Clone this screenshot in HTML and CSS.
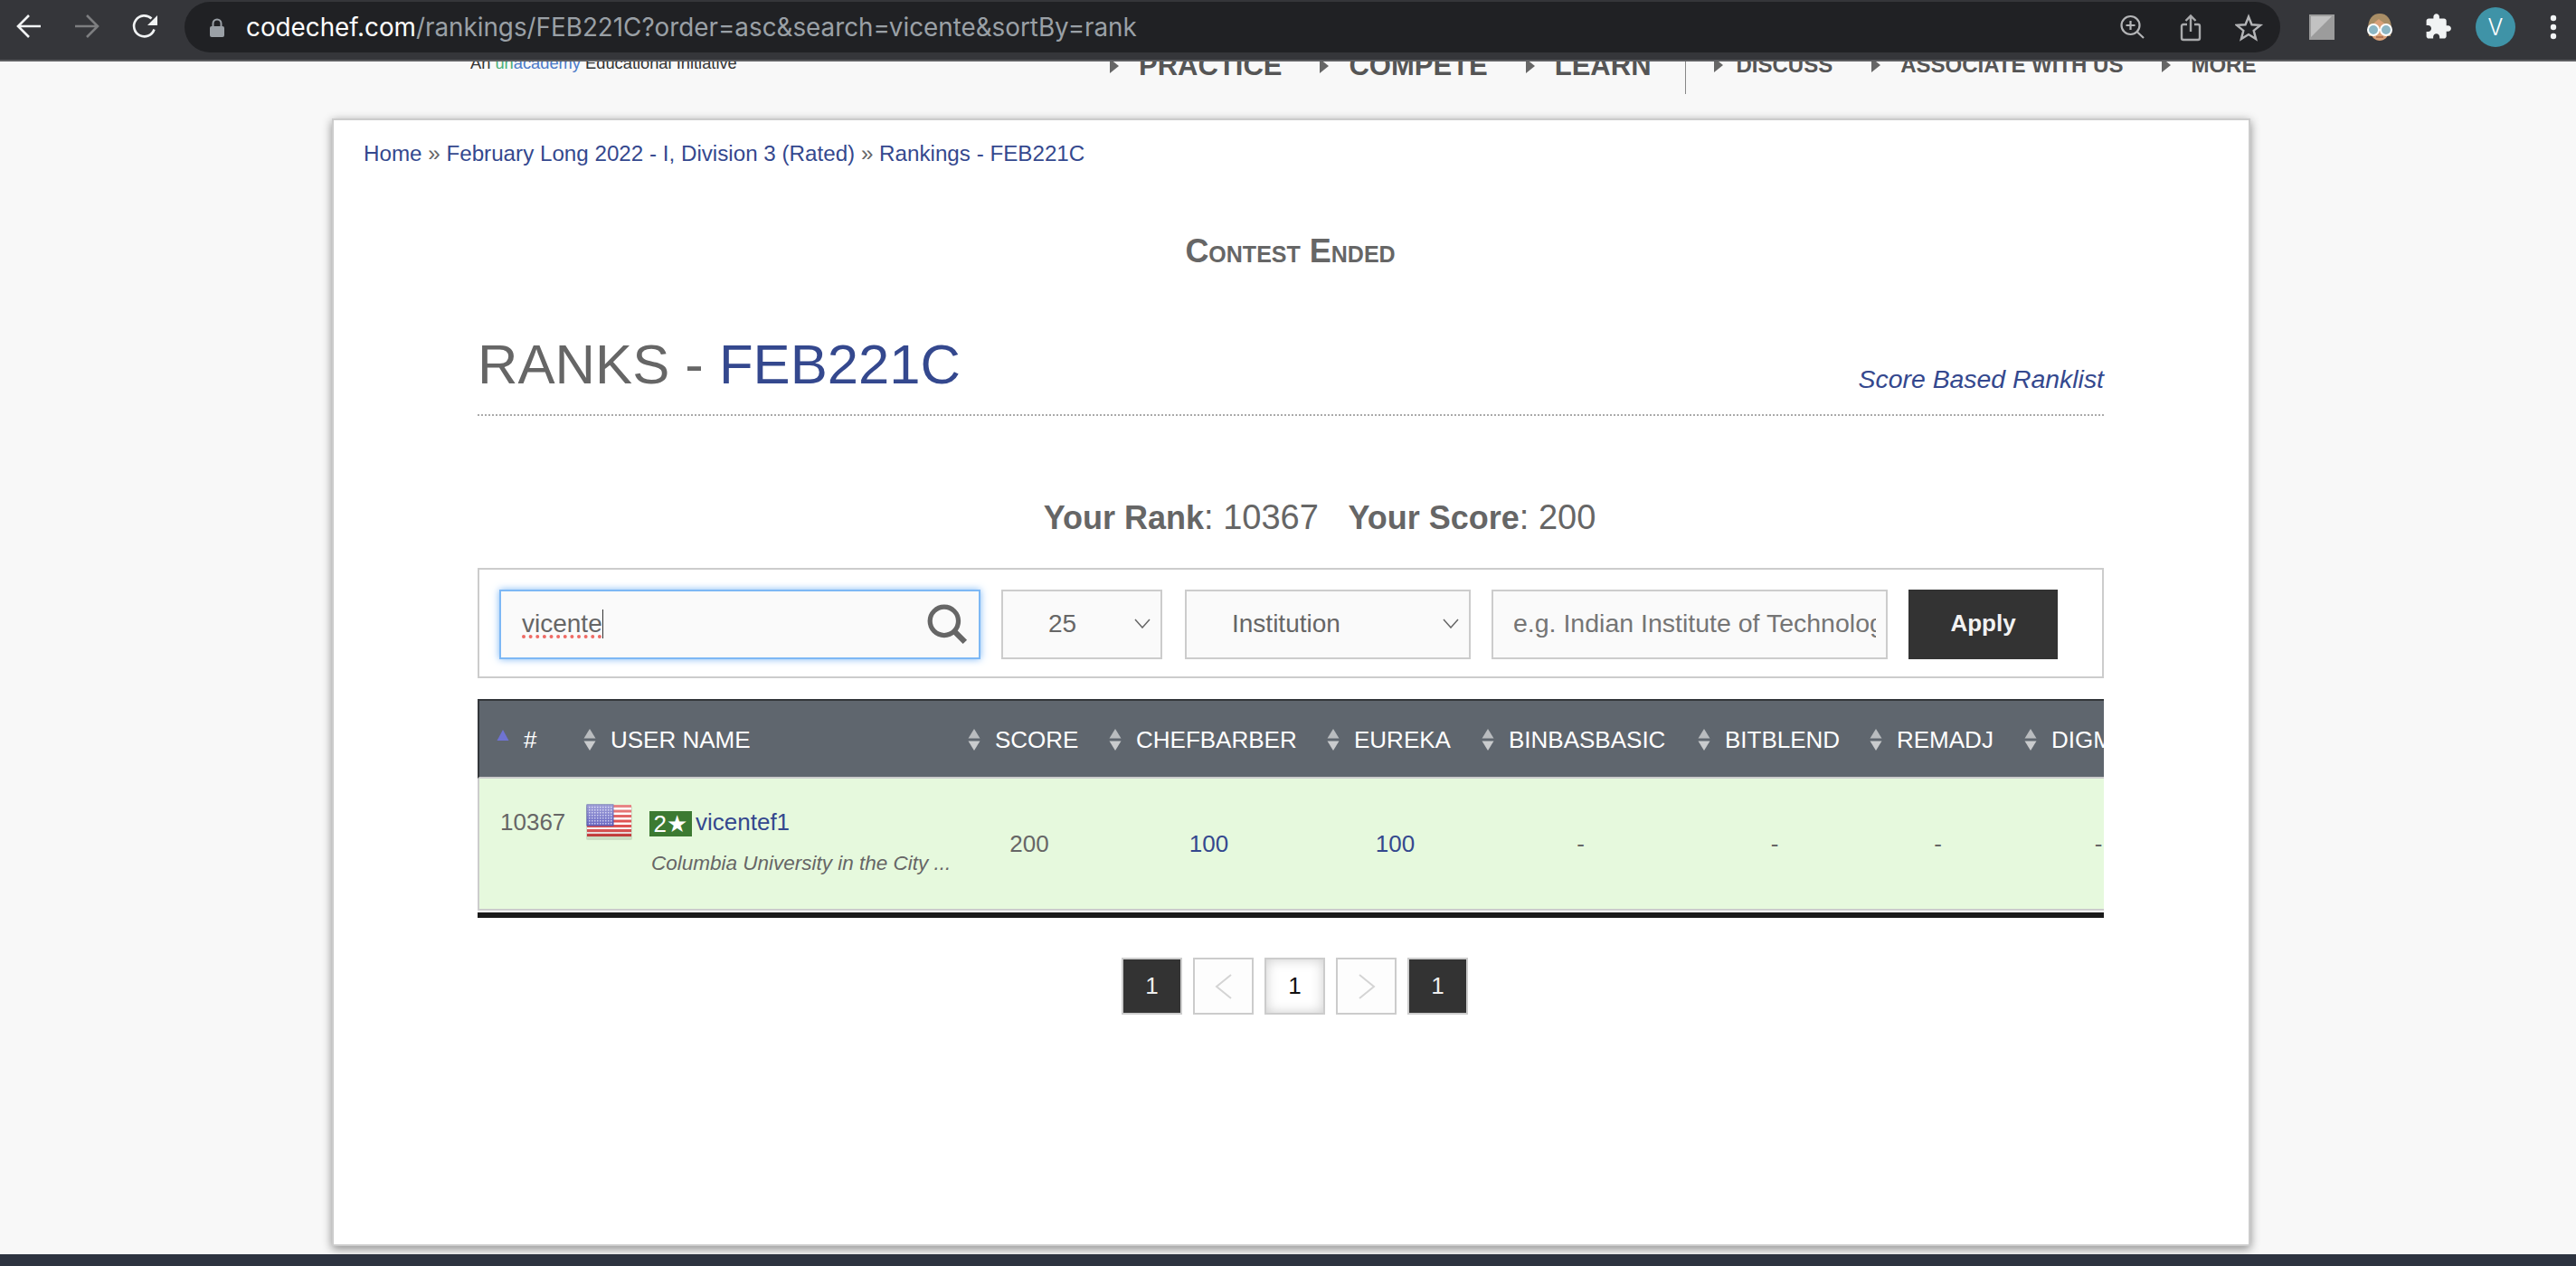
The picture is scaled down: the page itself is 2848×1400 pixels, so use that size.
FILE: index.html
```html
<!DOCTYPE html>
<html lang="en">
<head>
  <meta charset="UTF-8">
  <meta name="viewport" content="width=device-width, initial-scale=1.0">
  <title>Rankings - FEB221C</title>
  <link rel="stylesheet" href="styles.css">
</head>
<body>
  <svg class="defs" width="0" height="0">
    <symbol id="sort" viewBox="0 0 14 24">
      <path d="M7 0L13.5 10.5H.5z" fill="#b9bcbf"/>
      <path d="M7 24L.5 13.5H13.5z" fill="#c9cbcd"/>
    </symbol>
    <symbol id="chevron" viewBox="0 0 18 11">
      <path d="M1 1l8 9 8-9" fill="none" stroke="#666" stroke-width="1.5"/>
    </symbol>
  </svg>

  <div id="browser-bar">
    <svg class="tool-icon" viewBox="0 0 32 32"><path d="M29 16H4M16 4L4 16l12 12" fill="none" stroke="#f1f3f4" stroke-width="2.6"/></svg>
    <svg class="tool-icon" viewBox="0 0 32 32"><path d="M3 16h25M16 4l12 12-12 12" fill="none" stroke="#7d7e80" stroke-width="2.6"/></svg>
    <svg class="tool-icon" viewBox="0 0 32 32"><path d="M26.5 19.5A11.5 11.5 0 1 1 23.5 7.5" fill="none" stroke="#f1f3f4" stroke-width="2.6"/><path d="M30 4v11H19z" fill="#f1f3f4"/></svg>
    <div id="omnibox">
      <svg class="lock" viewBox="0 0 16 21"><path d="M3.5 10V6a4.5 4.5 0 0 1 9 0v4" fill="none" stroke="#9aa0a6" stroke-width="2"/><rect y="9" width="16" height="12" rx="2" fill="#9aa0a6"/></svg>
      <div class="url"><span class="url-host">codechef.com</span>/rankings/FEB221C?order=asc&amp;search=vicente&amp;sortBy=rank</div>
      <div class="omni-actions">
        <svg class="tool-icon" viewBox="0 0 32 32"><circle cx="12.5" cy="14" r="10" fill="none" stroke="#b4b5b7" stroke-width="2.2"/><path d="M20 21.5l7 6.500M12.500 9v10M7.500 14h10" fill="none" stroke="#b4b5b7" stroke-width="2.2"/></svg>
        <svg class="tool-icon" viewBox="0 0 32 32"><path d="M11 13H7a2 2 0 0 0-2 2v13a2 2 0 0 0 2 2h16a2 2 0 0 0 2-2V15a2 2 0 0 0-2-2h-4M15 21V4M9.500 9L15 3.500 20.500 9" fill="none" stroke="#a9aaac" stroke-width="2.4"/></svg>
        <svg class="tool-icon" viewBox="0 0 32 32"><path d="M15 4.500l3.500 8.800 9.500.6-7.300 6 2.400 9.200-8.100-5-8.100 5 2.400-9.200-7.300-6 9.500-.6z" fill="none" stroke="#b4b5b7" stroke-width="2.400"/></svg>
      </div>
    </div>
    <div id="extensions">
      <svg class="ext-icon" viewBox="0 0 44 44"><rect x="8" y="8" width="28" height="28" fill="#9c9c9c"/><path d="M10 10h23L10 33z" fill="#c2c2c2"/></svg>
      <svg class="ext-icon" viewBox="0 0 44 44">
        <path d="M9 24C9 13 14 7 22 7s13 6 13 17l-1 8H10z" fill="#a98e66"/>
        <path d="M12 26c0-6 5-10 9-13 3 3 10 6 11 13 0 7-5 11-10 11s-10-4-10-11z" fill="#d8a078"/>
        <circle cx="15" cy="25" r="6" fill="#8cb6c4" stroke="#fff" stroke-width="2"/>
        <circle cx="29" cy="25" r="6" fill="#8cb6c4" stroke="#fff" stroke-width="2"/>
        <path d="M21 25h2" stroke="#fff" stroke-width="2"/>
        <path d="M18 33h8" stroke="#a5694d" stroke-width="1.500"/>
      </svg>
      <svg class="ext-icon" viewBox="0 0 44 44"><g transform="translate(7 6) scale(1.300)"><path fill="#f1f3f4" d="M20.500 11H19V7c0-1.100-.9-2-2-2h-4V3.500C13 2.120 11.880 1 10.500 1S8 2.120 8 3.500V5H4c-1.100 0-1.990.9-1.990 2v3.800H3.500c1.490 0 2.700 1.210 2.700 2.700s-1.210 2.700-2.700 2.700H2V20c0 1.100.9 2 2 2h3.800v-1.500c0-1.490 1.210-2.700 2.700-2.700 1.490 0 2.700 1.210 2.700 2.700V22H17c1.100 0 2-.9 2-2v-4h1.500c1.380 0 2.500-1.120 2.500-2.500S21.880 11 20.500 11z"/></g></svg>
      <div class="avatar">V</div>
      <svg class="ext-icon" viewBox="0 0 44 44"><g fill="#f1f3f4"><circle cx="22" cy="12" r="3.200"/><circle cx="22" cy="22" r="3.200"/><circle cx="22" cy="32" r="3.200"/></g></svg>
    </div>
  </div>

  <div id="site-header">
    <div class="tagline">An <span class="un">un</span><span class="academy">academy</span> Educational Initiative</div>
    <a class="nav-main">PRACTICE</a>
    <a class="nav-main">COMPETE</a>
    <a class="nav-main">LEARN</a>
    <div class="nav-divider"></div>
    <a class="nav-sub nav-sub-first">DISCUSS</a>
    <a class="nav-sub">ASSOCIATE WITH US</a>
    <a class="nav-sub">MORE</a>
  </div>

  <div id="card">
    <div class="crumbs"><a>Home</a> » <a>February Long 2022 - I, Division 3 (Rated)</a> » <a>Rankings - FEB221C</a></div>
    <div class="contest-state">Contest Ended</div>

    <div id="panel">
      <div class="title-row">
        <h1>RANKS - <a>FEB221C</a></h1>
        <a class="ranklist-link">Score Based Ranklist</a>
      </div>

      <div class="your-rank"><b>Your Rank</b>: 10367 <b class="your-score">Your Score</b>: 200</div>

      <div class="filters">
        <div class="search-box">
          <span class="typed">vicente</span><span class="caret"></span>
          <svg class="search-icon" viewBox="0 0 44 44"><circle cx="19" cy="19" r="15" fill="none" stroke="#666" stroke-width="5"/><path d="M30 30l11 11" stroke="#666" stroke-width="6"/></svg>
        </div>
        <div class="select-box select-size">25<svg class="chevron"><use href="#chevron"/></svg></div>
        <div class="select-box select-type">Institution<svg class="chevron"><use href="#chevron"/></svg></div>
        <input class="inst-input" type="text" placeholder="e.g. Indian Institute of Technology">
        <button class="apply-btn">Apply</button>
      </div>

      <div class="table-wrap">
        <table class="rank-table">
          <colgroup>
            <col class="c-rank"><col class="c-user"><col class="c-score"><col class="c-chef"><col class="c-eureka"><col class="c-binbas"><col class="c-bit"><col class="c-remadj"><col class="c-digm">
          </colgroup>
          <thead>
            <tr>
              <th><div class="th-in"><svg class="sort-active" viewBox="0 0 14 12"><path d="M7 0l6.500 12H.5z" fill="#6f73d2"/></svg>#</div></th>
              <th><div class="th-in"><svg class="sort"><use href="#sort"/></svg>USER NAME</div></th>
              <th><div class="th-in"><svg class="sort"><use href="#sort"/></svg>SCORE</div></th>
              <th><div class="th-in"><svg class="sort"><use href="#sort"/></svg>CHEFBARBER</div></th>
              <th><div class="th-in"><svg class="sort"><use href="#sort"/></svg>EUREKA</div></th>
              <th><div class="th-in"><svg class="sort"><use href="#sort"/></svg>BINBASBASIC</div></th>
              <th><div class="th-in"><svg class="sort"><use href="#sort"/></svg>BITBLEND</div></th>
              <th><div class="th-in"><svg class="sort"><use href="#sort"/></svg>REMADJ</div></th>
              <th><div class="th-in"><svg class="sort"><use href="#sort"/></svg>DIGMARATHON</div></th>
            </tr>
          </thead>
          <tbody>
            <tr>
              <td class="rank-cell">10367</td>
              <td class="user-cell">
                <div class="user-in">
                  <svg class="flag" viewBox="0 0 51 40">
                    <defs>
                      <linearGradient id="flag-shade" x1="0" y1="0" x2="0" y2="1">
                        <stop offset="0" stop-color="#fff" stop-opacity=".35"/>
                        <stop offset=".6" stop-color="#fff" stop-opacity="0"/>
                        <stop offset="1" stop-color="#600" stop-opacity=".3"/>
                      </linearGradient>
                      <pattern id="flag-dots" width="3" height="3" patternUnits="userSpaceOnUse">
                        <rect width="3" height="3" fill="#6c6cc4"/>
                        <rect width="1.500" height="1.500" fill="#c9c9ee"/>
                      </pattern>
                    </defs>
                    <rect x="0" y="2" width="51" height="38" rx="2" fill="#8f9a88" opacity=".3"/>
                    <rect x="1" y="1" width="49" height="35" fill="#fff"/>
                    <g fill="#dd4b4b">
                      <rect x="1" y="1" width="49" height="3"/>
                      <rect x="1" y="6.500" width="49" height="3"/>
                      <rect x="1" y="12" width="49" height="3"/>
                      <rect x="1" y="17.500" width="49" height="3"/>
                      <rect x="1" y="23" width="49" height="3"/>
                      <rect x="1" y="28" width="49" height="3"/>
                      <rect x="1" y="33" width="49" height="3"/>
                    </g>
                    <rect x="1" y="1" width="29" height="23" fill="url(#flag-dots)" stroke="#4a4aa8" stroke-width="1"/>
                    <rect x="1" y="1" width="49" height="35" fill="url(#flag-shade)"/>
                  </svg>
                  <div class="user-text">
                    <div class="user-line"><span class="rating">2★</span><a class="handle">vicentef1</a></div>
                    <div class="institution">Columbia University in the City ...</div>
                  </div>
                </div>
              </td>
              <td>200</td>
              <td><a>100</a></td>
              <td><a>100</a></td>
              <td>-</td>
              <td>-</td>
              <td>-</td>
              <td>-</td>
            </tr>
          </tbody>
        </table>
      </div>

      <div class="pager">
        <span class="page dark">1</span>
        <span class="page"><svg class="page-arrow" viewBox="0 0 20 28"><path d="M18 1L2 14l16 13" fill="none" stroke="#d4d4d4" stroke-width="2"/></svg></span>
        <span class="page current">1</span>
        <span class="page"><svg class="page-arrow" viewBox="0 0 20 28"><path d="M2 1l16 13L2 27" fill="none" stroke="#d4d4d4" stroke-width="2"/></svg></span>
        <span class="page dark">1</span>
      </div>
    </div>
  </div>

  <div id="footer"></div>
</body>
</html>
```

FILE: styles.css
```css
body {
  margin: 0;
  height: 1400px;
  overflow: hidden;
  display: flex;
  flex-direction: column;
  background-color: #f8f8f8;
  font-family: 'Liberation Sans', Arial, sans-serif;
  font-size: 26px;
  color: #666;
}

a {
  color: #34488e;
  text-decoration: none;
}

.defs {
  display: block;
  height: 0;
}

/* browser chrome */
#browser-bar {
  flex: none;
  height: 58px;
  padding: 0 0 8px 16px;
  display: flex;
  align-items: center;
  gap: 32px;
  background-color: #35363a;
  border-bottom: 2px solid #5c5d60;
}

.tool-icon {
  flex: none;
  width: 32px;
  height: 32px;
}

#omnibox {
  flex: none;
  width: 2317px;
  height: 56px;
  margin-left: -4px;
  align-self: flex-end;
  box-sizing: border-box;
  padding: 0 18px 0 28px;
  display: flex;
  align-items: center;
  border-radius: 28px;
  background-color: #202124;
}

.lock {
  flex: none;
  width: 16px;
  height: 21px;
  margin-right: 24px;
}

.url {
  font-family: Inter, sans-serif;
  font-size: 27.8px;
  color: #9aa0a6;
  white-space: nowrap;
}

.url-host {
  color: #fff;
}

.omni-actions {
  margin-left: auto;
  display: flex;
  gap: 32px;
}

#extensions {
  flex: none;
  margin-left: -8px;
  padding-top: 2px;
  display: flex;
  gap: 20px;
}

.ext-icon {
  flex: none;
  width: 44px;
  height: 44px;
}

.avatar {
  width: 44px;
  height: 44px;
  border-radius: 50%;
  background-color: #3f93a7;
  color: #fff;
  font-family: Inter, sans-serif;
  font-size: 25px;
  font-weight: 300;
  line-height: 44px;
  text-align: center;
}

/* site header, scrolled mostly under the browser bar */
#site-header {
  flex: none;
  height: 63px;
  overflow: hidden;
  padding-left: 520px;
  display: flex;
  align-items: flex-start;
  color: #555;
  font-weight: bold;
}

.tagline {
  flex: none;
  width: 707px;
  margin-top: -8px;
  font-size: 18.3px;
  line-height: 20px;
  font-weight: normal;
  color: #333;
}

.un {
  color: #4caf7a;
}

.academy {
  color: #4a7ac8;
}

.nav-main,
.nav-sub {
  flex: none;
  display: flex;
  align-items: center;
  color: #555;
  line-height: 30px;
}

.nav-main::before,
.nav-sub::before {
  content: "";
  width: 0;
  height: 0;
  margin-right: 22px;
  border-left: 10px solid #666;
  border-top: 8px solid transparent;
  border-bottom: 8px solid transparent;
}

.nav-main {
  font-size: 31px;
  margin-top: -10px;
  margin-right: 42px;
}

.nav-divider {
  flex: none;
  width: 1px;
  height: 36px;
  margin-left: -5px;
  margin-right: 31px;
  background-color: #888;
}

.nav-sub {
  font-size: 24px;
  margin-top: -11px;
  margin-right: 43px;
}

.nav-sub-first::before {
  margin-right: 15px;
}

/* main card */
#card {
  flex: none;
  width: 2121px;
  height: 1247px;
  margin-left: 367px;
  box-sizing: border-box;
  background-color: #fff;
  border: 2px solid #ccc;
  box-shadow: 0 3px 10px rgba(0, 0, 0, 0.45);
}

.crumbs {
  margin-top: 22px;
  padding-left: 33px;
  font-size: 24.2px;
  line-height: 30px;
}

.contest-state {
  margin-top: 73px;
  padding-right: 2px;
  text-align: center;
  font-size: 36px;
  line-height: 40px;
  font-weight: bold;
  font-variant: small-caps;
}

#panel {
  width: 1798px;
  margin-left: 159px;
}

.title-row {
  margin-top: 70px;
  display: flex;
  justify-content: space-between;
  align-items: flex-end;
  border-bottom: 2px dotted #aaa;
}

h1 {
  margin: 0 0 20px 0;
  font-size: 61.6px;
  line-height: 70px;
  font-weight: normal;
}

.ranklist-link {
  margin-bottom: 21px;
  font-size: 28.4px;
  line-height: 36px;
  font-style: italic;
}

.your-rank {
  margin-top: 90px;
  padding-left: 64px;
  text-align: center;
  font-size: 38px;
  line-height: 44px;
}

.your-rank b {
  font-size: 36px;
}

.your-score {
  margin-left: 22px;
}

/* filter bar */
.filters {
  margin-top: 33px;
  height: 122px;
  box-sizing: border-box;
  padding: 22px;
  border: 2px solid #ccc;
  display: flex;
  gap: 23px;
  font-size: 28px;
}

.search-box,
.select-box,
.inst-input {
  flex: none;
  height: 77px;
  box-sizing: border-box;
  display: flex;
  align-items: center;
  background-color: #fafafa;
  border: 2px solid #ccc;
}

.select-box,
.search-box {
  padding-bottom: 2px;
}

.search-box {
  width: 532px;
  padding-left: 23px;
  border-color: #7db8f5;
  box-shadow: 0 0 8px #7db8f5;
}

.typed {
  text-decoration: underline dotted #ef6a64 4px;
  text-underline-offset: 4px;
}

.caret {
  width: 1px;
  height: 32px;
  background-color: #333;
}

.search-icon {
  width: 46px;
  height: 46px;
  margin-left: auto;
  margin-right: 12px;
}

.select-box {
  padding-left: 50px;
}

.select-size {
  width: 178px;
}

.select-type {
  width: 316px;
  margin-left: 2px;
}

.chevron {
  width: 18px;
  height: 11px;
  margin-left: auto;
  margin-right: 11px;
}

.inst-input {
  width: 438px;
  padding: 0 11px 2px 22px;
  font-family: inherit;
  font-size: 28.5px;
  color: #666;
  outline: none;
}

.inst-input::placeholder {
  color: #757575;
}

.apply-btn {
  flex: none;
  width: 165px;
  height: 77px;
  padding-bottom: 3px;
  border: none;
  background-color: #333;
  color: #f2f2f2;
  font-family: inherit;
  font-size: 26px;
  font-weight: bold;
}

/* table */
.table-wrap {
  margin-top: 23px;
  padding-bottom: 2px;
  border-bottom: 6px solid #1a1a1a;
  overflow: hidden;
}

.rank-table {
  table-layout: fixed;
  width: 1884px;
  border-collapse: separate;
  border-spacing: 0;
}

.c-rank { width: 107px; }
.c-user { width: 425px; }
.c-score { width: 156px; }
.c-chef { width: 241px; }
.c-eureka { width: 171px; }
.c-binbas { width: 239px; }
.c-bit { width: 190px; }
.c-remadj { width: 171px; }
.c-digm { width: 184px; }

.rank-table th {
  height: 82px;
  padding: 2px 0 0 10px;
  box-sizing: content-box;
  background-color: #5f666e;
  border-top: 2px solid #33363a;
  border-bottom: 2px solid #ccc;
  color: #fff;
  font-weight: normal;
  text-align: left;
  white-space: nowrap;
  overflow: hidden;
}

.rank-table th:first-child {
  padding-left: 19px;
  border-left: 2px solid #33363a;
}

.th-in {
  display: flex;
  align-items: center;
  gap: 16px;
}

.sort {
  flex: none;
  width: 14px;
  height: 24px;
}

.sort-active {
  flex: none;
  width: 14px;
  height: 12px;
  margin-top: -10px;
}

.rank-table td {
  height: 146px;
  box-sizing: border-box;
  padding: 0;
  background-color: #e6f9dd;
  border-bottom: 2px solid #ccc;
  text-align: center;
  vertical-align: middle;
}

.rank-table .rank-cell {
  padding: 33px 0 0 23px;
  border-left: 2px solid #ccc;
  text-align: left;
  vertical-align: top;
  line-height: 30px;
}

.rank-table .user-cell {
  padding: 28px 0 0 13px;
  text-align: left;
  vertical-align: top;
}

.user-in {
  display: flex;
  gap: 19px;
}

.flag {
  flex: none;
  width: 51px;
  height: 40px;
}

.user-line {
  margin-top: 8px;
  display: flex;
  align-items: center;
  gap: 4px;
  height: 28px;
}

.rating {
  width: 47px;
  height: 28px;
  background-color: #3c7a32;
  color: #fff;
  font-family: 'Liberation Sans', 'DejaVu Sans', sans-serif;
  font-size: 26px;
  line-height: 28px;
  text-align: center;
  white-space: nowrap;
  overflow: hidden;
}

.handle {
  margin-top: -4px;
  font-size: 26px;
}

.institution {
  margin-top: 15px;
  margin-left: 2px;
  font-size: 22.5px;
  line-height: 30px;
  font-style: italic;
  white-space: nowrap;
}

/* pager */
.pager {
  margin-top: 44px;
  padding-left: 9px;
  display: flex;
  justify-content: center;
  gap: 12px;
}

.page {
  width: 67px;
  height: 63px;
  box-sizing: border-box;
  display: flex;
  align-items: center;
  justify-content: center;
  background-color: #fdfdfd;
  border: 2px solid #ccc;
  font-size: 26px;
  color: #111;
}

.page.dark {
  background-color: #333;
  color: #eee;
}

.page.current {
  background-color: #fff;
  box-shadow: inset 0 0 14px #ccc;
}

.page-arrow {
  width: 20px;
  height: 28px;
}

#footer {
  flex: 1;
  margin-top: 9px;
  background-color: #2d3340;
}
```
